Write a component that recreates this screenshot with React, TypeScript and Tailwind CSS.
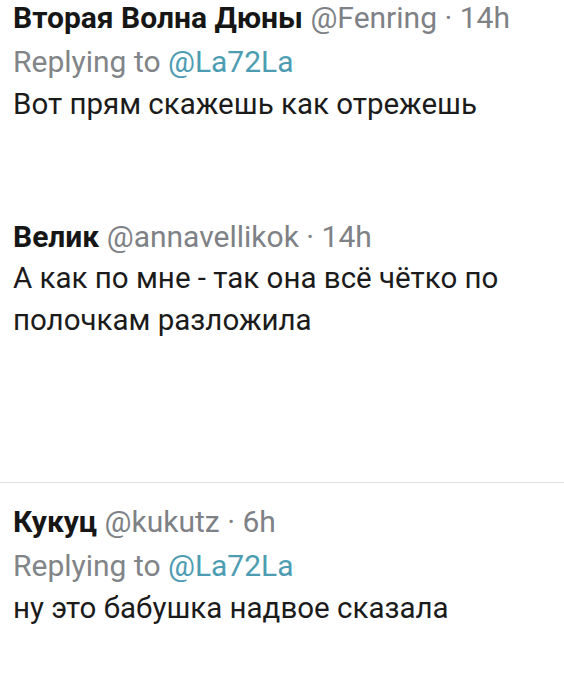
import React from "react";

const Handle = ({ h, t }: { h: string; t: string }) => (
  <span className="font-normal text-[#7e8185] text-[30px]">
    {" "}@{h} · {t}
  </span>
);

const Replying = ({ cls }: { cls: string }) => (
  <div className={`${cls} text-[30px] text-[#828588] font-normal whitespace-nowrap`}>
    Replying to <span className="text-[#4c9db2]">@La72La</span>
  </div>
);

export default function App() {
  return (
    <div className="w-[564px] h-[700px] bg-white overflow-hidden text-[#1b1b1b]" style={{ fontFamily: "Roboto, 'Noto Sans', sans-serif" }}>
      <div className="px-[13px]">
        <div>
          <div className="leading-[36px] text-[30px] whitespace-nowrap">
            <span className="font-bold text-[#161616]">Вторая Волна Дюны</span>
            <Handle h="Fenring" t="14h" />
          </div>
          <Replying cls="mt-[4px] leading-[44px]" />
          <div className="leading-[40px] text-[29.5px] whitespace-nowrap">Вот прям скажешь как отрежешь</div>
        </div>
        <div className="mt-[93px]">
          <div className="leading-[40px] text-[30px] whitespace-nowrap">
            <span className="font-bold text-[#161616]">Велик</span>
            <Handle h="annavellikok" t="14h" />
          </div>
          <div className="leading-[42px] text-[29.5px] w-[520px]">А как по мне - так она всё чётко по полочкам разложила</div>
        </div>
      </div>
      <div className="mt-[141px] h-px bg-[#e1e1e1]" />
      <div className="px-[13px] mt-[19px]">
        <div className="leading-[40px] text-[30px] whitespace-nowrap">
          <span className="font-bold text-[#161616]">Кукуц</span>
          <Handle h="kukutz" t="6h" />
        </div>
        <Replying cls="mt-[2px] leading-[44px]" />
        <div className="leading-[40px] text-[29.5px] whitespace-nowrap">ну это бабушка надвое сказала</div>
      </div>
    </div>
  );
}
